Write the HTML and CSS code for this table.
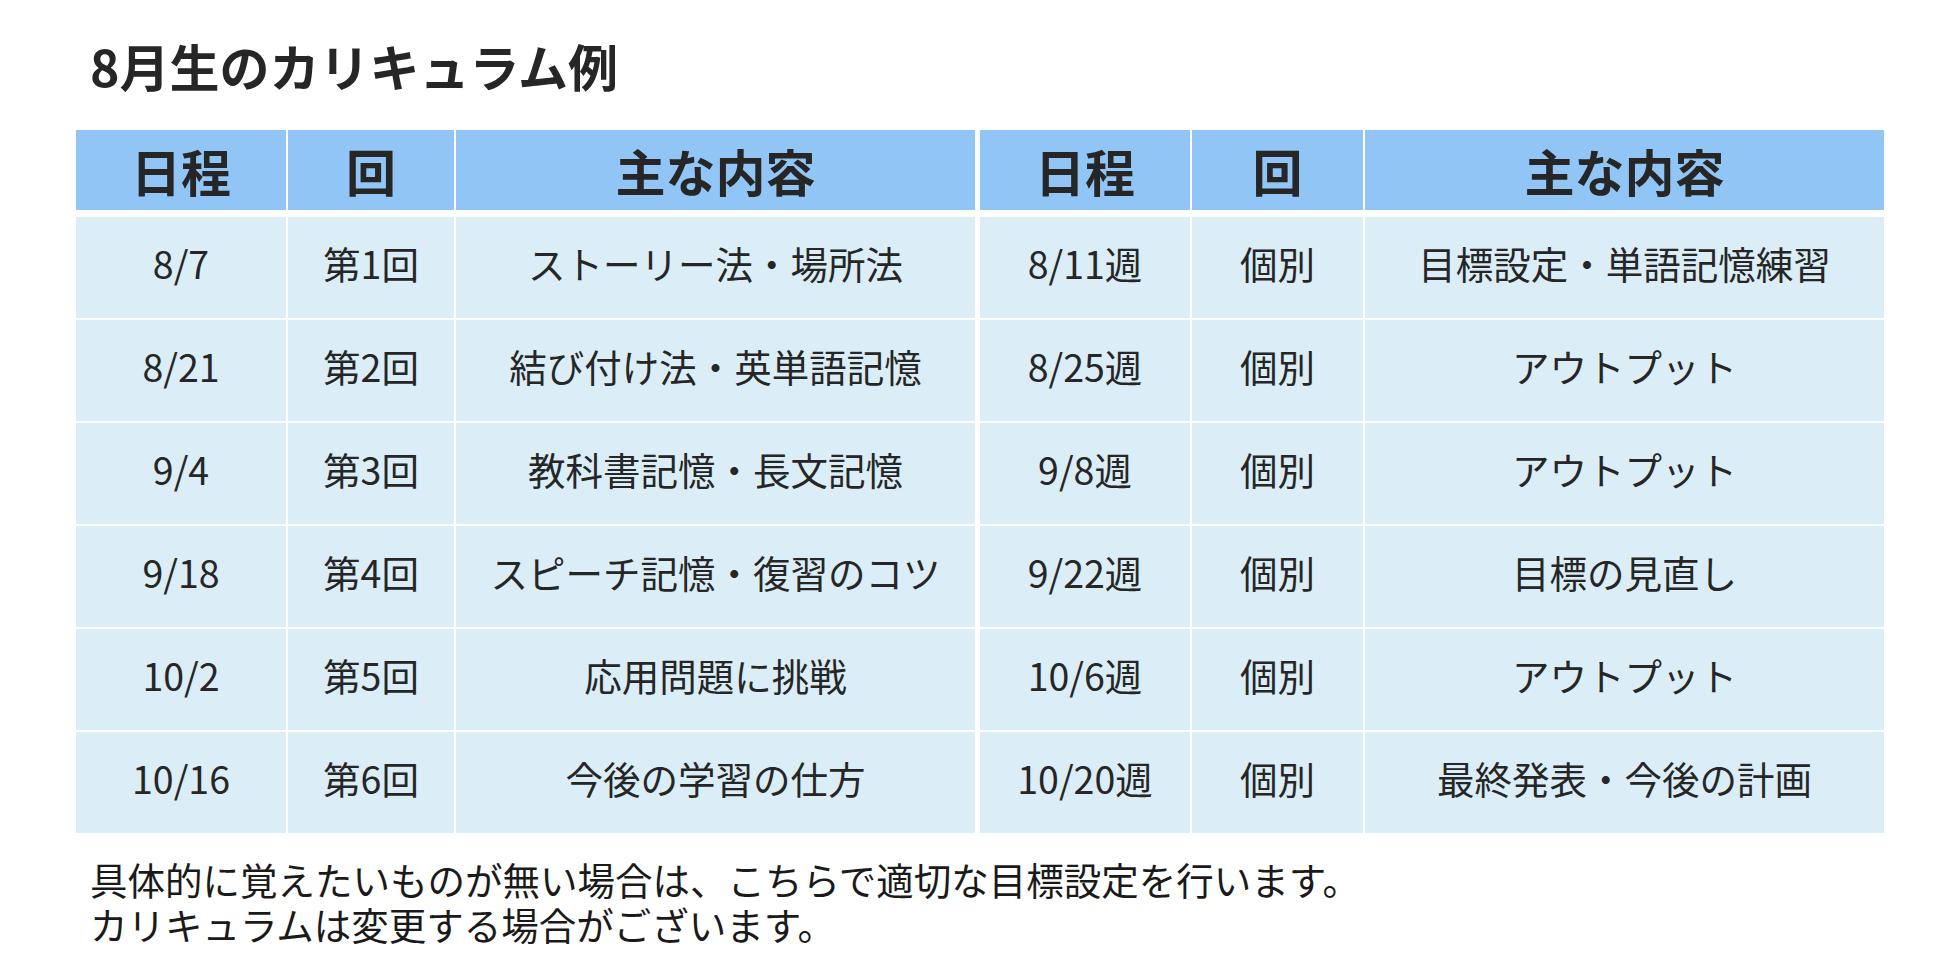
FILE: index.html
```html
<!DOCTYPE html>
<html lang="ja">
<head>
<meta charset="utf-8">
<title>8月生のカリキュラム例</title>
<link rel="stylesheet" href="styles.css">
</head>
<body>
<div class="page">
  <h2 class="title">8月生のカリキュラム例</h2>
  <table class="curriculum">
    <colgroup>
      <col class="c-date">
      <col class="c-no">
      <col class="c-content">
      <col class="c-date2">
      <col class="c-no2">
      <col class="c-content2">
    </colgroup>
    <thead>
      <tr>
        <th>日程</th>
        <th>回</th>
        <th class="split">主な内容</th>
        <th>日程</th>
        <th>回</th>
        <th class="last">主な内容</th>
      </tr>
    </thead>
    <tbody>
      <tr>
        <td>8/7</td><td>第1回</td><td class="split">ストーリー法・場所法</td>
        <td>8/11週</td><td>個別</td><td class="last">目標設定・単語記憶練習</td>
      </tr>
      <tr>
        <td>8/21</td><td>第2回</td><td class="split">結び付け法・英単語記憶</td>
        <td>8/25週</td><td>個別</td><td class="last">アウトプット</td>
      </tr>
      <tr>
        <td>9/4</td><td>第3回</td><td class="split">教科書記憶・長文記憶</td>
        <td>9/8週</td><td>個別</td><td class="last">アウトプット</td>
      </tr>
      <tr>
        <td>9/18</td><td>第4回</td><td class="split">スピーチ記憶・復習のコツ</td>
        <td>9/22週</td><td>個別</td><td class="last">目標の見直し</td>
      </tr>
      <tr>
        <td>10/2</td><td>第5回</td><td class="split">応用問題に挑戦</td>
        <td>10/6週</td><td>個別</td><td class="last">アウトプット</td>
      </tr>
      <tr class="final">
        <td>10/16</td><td>第6回</td><td class="split">今後の学習の仕方</td>
        <td>10/20週</td><td>個別</td><td class="last">最終発表・今後の計画</td>
      </tr>
    </tbody>
  </table>
  <div class="note">
    <p class="note-line">具体的に覚えたいものが無い場合は、こちらで適切な目標設定を行います。</p>
    <p class="note-line">カリキュラムは変更する場合がございます。</p>
  </div>
</div>
</body>
</html>
```

FILE: styles.css
```css
html, body {
  margin: 0;
  padding: 0;
  background: #ffffff;
}

body {
  font-family: "Noto Sans CJK JP", "Noto Sans", sans-serif;
  color: #262626;
}

.page {
  padding: 35px 76px 0 76px;
}

.title {
  margin: 0;
  padding-left: 14px;
  font-size: 50px;
  line-height: 60px;
  font-weight: 700;
  color: #262626;
}

.curriculum {
  margin-top: 35px;
  width: 1808px;
  table-layout: fixed;
  border-collapse: separate;
  border-spacing: 0;
}

.c-date { width: 212px; }
.c-no { width: 168px; }
.c-content { width: 524px; }
.c-date2 { width: 212px; }
.c-no2 { width: 173px; }
.c-content2 { width: 519px; }

.curriculum th,
.curriculum td {
  box-sizing: border-box;
  padding: 0;
  text-align: center;
  vertical-align: middle;
  border-right: 2px solid #ffffff;
  border-bottom: 2px solid #ffffff;
}

.curriculum th {
  height: 87px;
  background: #91c5f5;
  border-bottom: 7px solid #ffffff;
  font-size: 50px;
  font-weight: 700;
  line-height: 1;
}

.curriculum td {
  height: 103px;
  padding-bottom: 10px;
  background: #dbeef8;
  font-size: 37.5px;
  font-weight: 400;
  line-height: 1.2;
}

.curriculum .final td {
  height: 101px;
  border-bottom: 0;
}

.curriculum .split {
  border-right: 5px solid #ffffff;
}

.curriculum .last {
  border-right: 0;
}

.note {
  margin-top: 23px;
  padding-left: 14px;
  display: flex;
  flex-direction: column;
  color: #1a1a1a;
}

.note-line {
  margin: 0;
  height: 45px;
  font-size: 37.5px;
  line-height: 45px;
  overflow: visible;
}
```
